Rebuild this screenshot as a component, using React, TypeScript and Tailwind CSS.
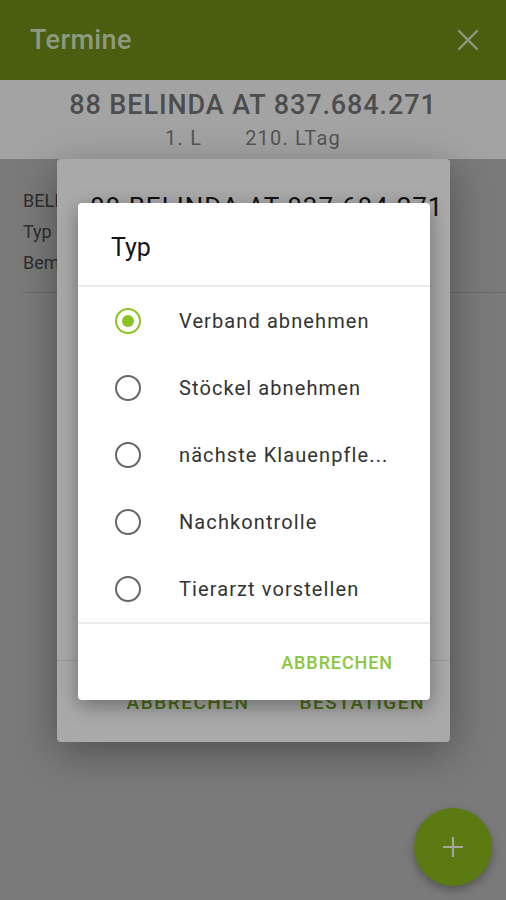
import React from 'react';

const OPTIONS = [
  'Verband abnehmen',
  'Stöckel abnehmen',
  'nächste Klauenpfle...',
  'Nachkontrolle',
  'Tierarzt vorstellen',
];

const Radio: React.FC<{ checked?: boolean }> = ({ checked }) => (
  <div
    className={`w-[26px] h-[26px] rounded-full border-[2.5px] flex items-center justify-center ${
      checked ? 'border-[#8cc320]' : 'border-[#666]'
    }`}
  >
    {checked && <div className="w-[12px] h-[12px] rounded-full bg-[#8cc320]" />}
  </div>
);

const App: React.FC = () => {
  return (
    <div
      className="relative w-[506px] h-[900px] overflow-hidden bg-[#7a7a7a]"
      style={{ fontFamily: 'Roboto, "Liberation Sans", sans-serif' }}
    >
      {/* App bar */}
      <div className="h-[80px] bg-[#4b5e10] flex items-center justify-between pl-[30px] pr-[26px]">
        <span className="text-[27px] font-medium tracking-[0.4px] text-[#8d9a80]">Termine</span>
        <svg width="24" height="24" viewBox="0 0 24 24" className="text-[#8d9a80]">
          <path d="M3 3L21 21M21 3L3 21" stroke="currentColor" strokeWidth="2.4" strokeLinecap="round" />
        </svg>
      </div>

      {/* Animal band */}
      <div className="h-[79px] bg-[#a3a3a3] flex flex-col items-center pt-[8px]">
        <div className="text-[27px] font-medium leading-[34px] text-[#4d4d4d] tracking-[0.9px]">88 BELINDA AT 837.684.271</div>
        <div className="flex gap-[43px] text-[20px] leading-[28px] pt-[2px] tracking-[1.2px] text-[#555]">
          <span>1. L</span>
          <span>210. LTag</span>
        </div>
      </div>

      {/* Page content */}
      <div className="pl-[23px] pt-[26px] text-[18px] leading-[31px] text-[#2e2e2e]">
        <div>BELINDA</div>
        <div>Typ</div>
        <div>Bemerkung</div>
        <div className="mt-[14px] h-px bg-[#6a6a6a]" />
      </div>

      {/* FAB */}
      <div className="absolute left-[414px] top-[808px] w-[78px] h-[78px] rounded-full bg-[#5b7a12] shadow-[0_4px_10px_rgba(0,0,0,0.3)] flex items-center justify-center">
        <svg width="24" height="24" viewBox="0 0 24 24">
          <path d="M12 2V22M2 12H22" stroke="#9fa89a" strokeWidth="2.2" />
        </svg>
      </div>

      {/* Underlying dialog (dimmed) */}
      <div className="absolute left-[57px] top-[159px] w-[393px] h-[583px] rounded-[4px] bg-[#a9a9a9] shadow-[0_10px_40px_rgba(0,0,0,0.35)] flex flex-col">
        <div className="pl-[33px] pt-[29px] text-[26px] leading-[38px] text-[#111] whitespace-nowrap tracking-[1px]">
          88 BELINDA AT 837.684.271
        </div>
        <div className="flex-1" />
        <div className="h-px bg-[#999]" />
        <div className="h-[81px] flex items-center justify-end gap-[50px] pr-[25px] pt-[4px] text-[19px] font-medium tracking-[1.5px] text-[#4a6a10]">
          <span>ABBRECHEN</span>
          <span>BESTÄTIGEN</span>
        </div>
      </div>

      {/* Type picker dialog */}
      <div className="absolute left-[78px] top-[203px] w-[352px] h-[497px] rounded-[4px] bg-white shadow-[0_6px_20px_rgba(0,0,0,0.35)] flex flex-col">
        <div className="h-[82px] flex items-center pl-[33px] pt-[8px] text-[25px] text-[#151515]">Typ</div>
        <div className="h-[2px] bg-[#ececec]" />
        <div className="flex flex-col">
          {OPTIONS.map((o, i) => (
            <div key={o} className="h-[67px] flex items-center pl-[37px]">
              <Radio checked={i === 0} />
              <span className="ml-[38px] text-[20px] tracking-[1.1px] text-[#333]">{o}</span>
            </div>
          ))}
        </div>
        <div className="h-[2px] bg-[#ececec]" />
        <div className="flex-1 flex items-center justify-end pr-[37px]">
          <span className="text-[18px] font-medium tracking-[0.9px] text-[#8cc63f]">ABBRECHEN</span>
        </div>
      </div>
    </div>
  );
};

export default App;
